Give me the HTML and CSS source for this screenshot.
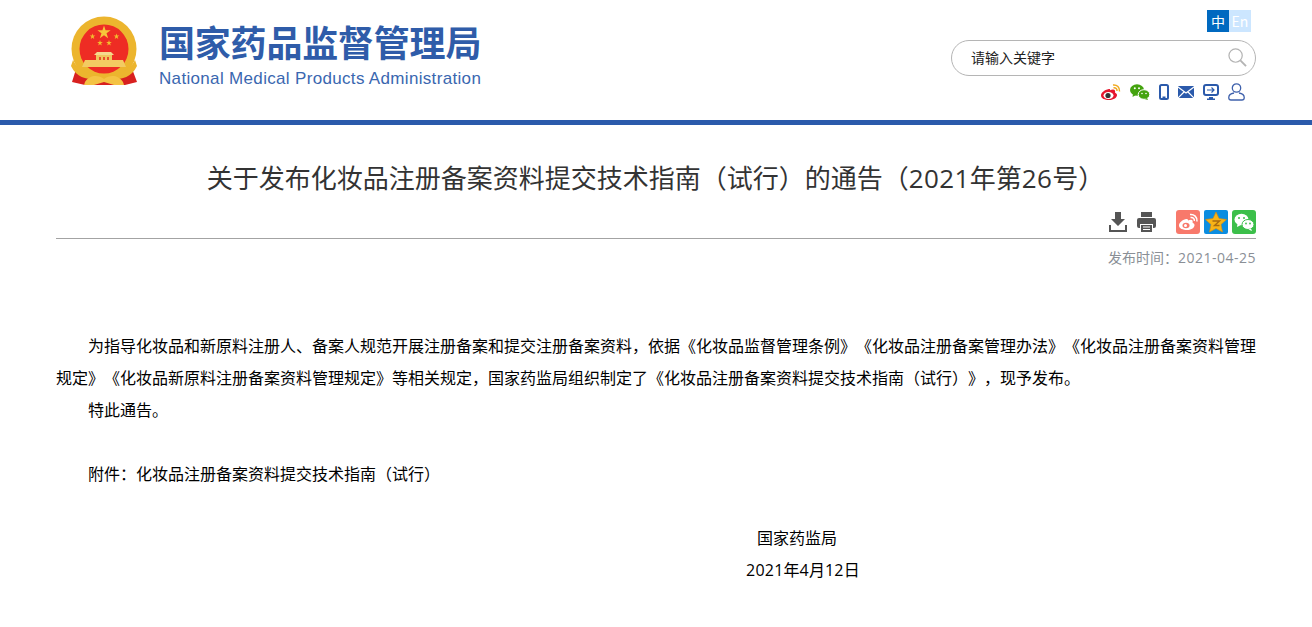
FILE: index.html
```html
<!DOCTYPE html>
<html>

<head>
    <meta content="text/html; charset=utf-8" http-equiv="Content-Type">
    <title>关于发布化妆品注册备案资料提交技术指南（试行）的通告（2021年第26号）</title>
    <link rel="stylesheet" href="styles.css">
</head>

<body>
    <div class="header">
        <div class="container headerInner">
            <div class="logo">
                <svg class="emblem" width="68" height="70" viewBox="0 0 68 70">
                    <defs>
                        <polygon id="star" points="0,-1 .225,-.31 .95,-.31 .36,.12 .59,.81 0,.38 -.59,.81 -.36,.12 -.95,-.31 -.225,-.31"/>
                    </defs>
                    <path d="M6 50 L1 66 L14 69 L54 69 L66 66 L60 50 Z" fill="#d8201f"/>
                    <circle cx="33" cy="33" r="32.500" fill="#ecb52e"/>
                    <circle cx="33" cy="33" r="24.500" fill="#ee2c24"/>
                    <use href="#star" transform="translate(33 16.500) scale(7)" fill="#f6c83a"/>
                    <use href="#star" transform="translate(21.500 20.500) scale(3)" fill="#f2bd2e"/>
                    <use href="#star" transform="translate(45.500 20.500) scale(3)" fill="#f2bd2e"/>
                    <use href="#star" transform="translate(29 27) scale(3)" fill="#f2bd2e"/>
                    <use href="#star" transform="translate(38 27) scale(3)" fill="#f2bd2e"/>
                    <path d="M26 36 H40 L43 39 H23 Z" fill="#f5d98e"/>
                    <path d="M25 39 H41 V44 H25 Z" fill="#f0c65e"/>
                    <path d="M28 41 h2 v3 h-2 z M32 41 h2 v3 h-2 z M36 41 h2 v3 h-2 z" fill="#e8502a"/>
                    <path d="M14 44 H52 L55 51 H11 Z" fill="#f3cb62"/>
                    <path d="M2 44 C9 58 22 58 33 58 C44 58 57 58 64 44 L66 50 C58 66 44 63 33 63 C22 63 8 66 0 50 Z" fill="#ecb52e"/>
                    <path d="M14 66 C19 58 28 59 33 63 C38 59 47 58 52 66 L53 69 H43 L33 66 L23 69 H13 Z" fill="#f4c344"/>
                </svg>
                <div class="logoText">
                    <div class="logoCn">国家药品监督管理局</div>
                    <div class="logoEn">National Medical Products Administration</div>
                </div>
            </div>
            <div class="tools">
                <div class="lang"><span class="langCn">中</span><span class="langEn">En</span></div>
                <div class="searchBox">
                    <span class="searchText">请输入关键字</span>
                    <svg width="19" height="19" viewBox="0 0 20 20" fill="none" stroke="#b4b4b4">
                        <circle cx="8" cy="8" r="7" stroke-width="1.300"/>
                        <path d="M13 13 L19 19" stroke-width="2"/>
                    </svg>
                </div>
                <div class="topIcons">
                    <svg width="20" height="18" viewBox="0 0 20 18">
                        <path d="M8 6 C3 7 0 10 0 12.500 C0 15.500 4 17 8 17 C13 17 16 14.500 16 12 C16 10.500 14.500 10 14 9.500 C14.500 8 14 6.500 12 6.500 C11 6.500 10 7 9 7.300 C9.300 6.500 9 5.800 8 6 Z" fill="#e6162d"/>
                        <ellipse cx="7.500" cy="12.500" rx="5" ry="3.500" fill="#fff"/>
                        <circle cx="7" cy="12.500" r="2.600" fill="#333"/>
                        <path d="M12 2 C16 1.500 19 4.500 18.500 8.500 M12.500 4.800 C14.800 4.500 16.200 6 16 8" fill="none" stroke="#f0a91f" stroke-width="1.500"/>
                    </svg>
                    <svg width="20" height="16" viewBox="0 0 20 16">
                        <ellipse cx="7" cy="6" rx="7" ry="5.800" fill="#44a30f"/>
                        <path d="M3 10 L2.500 13 L6 11 Z" fill="#44a30f"/>
                        <ellipse cx="14" cy="10.500" rx="5.800" ry="4.800" fill="#44a30f" stroke="#fff" stroke-width="1"/>
                        <path d="M17 14 L18 16 L14.500 15 Z" fill="#44a30f"/>
                        <circle cx="4.800" cy="4.300" r="1" fill="#fff"/><circle cx="9" cy="4.300" r="1" fill="#fff"/>
                        <circle cx="12" cy="9.500" r=".8" fill="#fff"/><circle cx="16" cy="9.500" r=".8" fill="#fff"/>
                    </svg>
                    <svg width="10" height="16" viewBox="0 0 10 16">
                        <rect x="1" y="1" width="8" height="14" rx="1.500" fill="#fff" stroke="#2b5aab" stroke-width="2"/>
                        <rect x="3.500" y="12.500" width="3" height="1.500" fill="#2b5aab"/>
                    </svg>
                    <svg width="16" height="12" viewBox="0 0 16 12">
                        <rect width="16" height="12" rx="1" fill="#2b5aab"/>
                        <path d="M0 1 L8 7 L16 1 M0 12 L6 6 M16 12 L10 6" fill="none" stroke="#fff" stroke-width="1.200"/>
                    </svg>
                    <svg width="16" height="16" viewBox="0 0 16 16">
                        <rect x="1" y="1" width="14" height="10" rx="2" fill="#fff" stroke="#2b5aab" stroke-width="2"/>
                        <path d="M6 13 h4 v1.500 h2 V16 H4 v-1.500 h2 z" fill="#2b5aab"/>
                        <path d="M4 6 h7 M8.500 3.500 L11 6 L8.500 8.500" fill="none" stroke="#2b5aab" stroke-width="1.200"/>
                    </svg>
                    <svg width="17" height="18" viewBox="0 0 17 18" fill="none" stroke="#3f61ac" stroke-width="1.300">
                        <circle cx="8.500" cy="5" r="4.200"/>
                        <path d="M6 10 C3 10.500 .5 12 .8 15 C.9 16.500 2 17 3 17 H14 C15 17 16.100 16.500 16.200 15 C16.500 12 14 10.500 11 10"/>
                    </svg>
                </div>
            </div>
        </div>
    </div>

    <div class="container">
        <h1 class="title">关于发布化妆品注册备案资料提交技术指南（试行）的通告（<span class="num">2021</span>年第<span class="num">26</span>号）</h1>
        <div class="shareBar">
            <svg class="shareDown" width="18" height="20" viewBox="0 0 18 20" fill="#555">
                <path d="M6 0 h6 v7 h4 L9 14 L2 7 h4 z"/>
                <path d="M0 13 h2 v5 h14 v-5 h2 v7 H0 z"/>
            </svg>
            <svg class="sharePrint" width="19" height="20" viewBox="0 0 19 20" fill="#555">
                <rect x="4" y="0" width="11" height="5"/>
                <path d="M2 6 h15 a2 2 0 0 1 2 2 v6 a2 2 0 0 1 -2 2 h-1 v-4 H3 v4 H2 a2 2 0 0 1 -2 -2 V8 a2 2 0 0 1 2 -2 z"/>
                <rect x="4" y="13" width="11" height="7"/>
                <path d="M6 15 h7 M6 17.500 h7" stroke="#fff" stroke-width="1"/>
            </svg>
            <svg class="shareBtn" width="24" height="24" viewBox="0 0 24 24">
                <rect width="24" height="24" rx="3" fill="#f8796b"/>
                <path d="M10 9 C6 10 3 13 3 15.500 C3 18.500 7 20 11 20 C16 20 18.500 17.500 18.500 15 C18.500 13.500 17 13 16.500 12.500 C17 11 16.500 9.800 15 9.800 C14 9.800 13 10.200 12 10.500 C12.300 9.500 11.300 8.700 10 9 Z" fill="#fff"/>
                <ellipse cx="10" cy="15.500" rx="3.500" ry="2.800" fill="#f8796b"/>
                <circle cx="9.500" cy="15.500" r="1.500" fill="#fff"/>
                <path d="M14 4.500 C18 4 21.500 7 21 11.500 M14.500 7.500 C17 7 18.700 9 18.300 11" fill="none" stroke="#fff" stroke-width="1.500"/>
            </svg>
            <svg class="shareBtn" width="24" height="24" viewBox="0 0 24 24">
                <rect width="24" height="24" rx="2" fill="#0b8de0"/>
                <path d="M12 2 L15 8.500 L22.500 9.500 L17 14.500 L18.500 22 L12 18.500 L5.500 22 L7 14.500 L1.500 9.500 L9 8.500 Z" fill="#f8b417" stroke="#d98a0c" stroke-width=".6"/>
                <path d="M8.500 11 h7 l-5 4.500 h5" fill="none" stroke="#a86a10" stroke-width="1.400"/>
            </svg>
            <svg class="shareBtn" width="24" height="24" viewBox="0 0 24 24">
                <rect width="24" height="24" rx="3" fill="#3cbf4a"/>
                <ellipse cx="9.500" cy="9.500" rx="7" ry="5.800" fill="#fff"/>
                <path d="M5.500 13.500 L5 17 L9 15 Z" fill="#fff"/>
                <ellipse cx="16" cy="14.500" rx="6" ry="5" fill="#fff" stroke="#3cbf4a"/>
                <path d="M19 18.500 L20 21 L16.500 19.500 Z" fill="#fff"/>
                <circle cx="7" cy="8" r="1" fill="#3cbf4a"/><circle cx="12" cy="8" r="1" fill="#3cbf4a"/>
                <circle cx="14" cy="13.500" r=".9" fill="#3cbf4a"/><circle cx="18" cy="13.500" r=".9" fill="#3cbf4a"/>
            </svg>
        </div>
        <div class="pubDate">发布时间：<span class="num">2021-04-25</span></div>
        <div class="article">
            <p class="indent">为指导化妆品和新原料注册人、备案人规范开展注册备案和提交注册备案资料，依据《化妆品监督管理条例》《化妆品注册备案管理办法》《化妆品注册备案资料管理规定》《化妆品新原料注册备案资料管理规定》等相关规定，国家药监局组织制定了《化妆品注册备案资料提交技术指南（试行）》，现予发布。</p>
            <p class="indent">特此通告。</p>
            <p>&nbsp;</p>
            <p class="indent">附件：化妆品注册备案资料提交技术指南（试行）</p>
            <p>&nbsp;</p>
            <p class="signOrg">国家药监局</p>
            <p class="signDate"><span class="num">2021</span>年<span class="num">4</span>月<span class="num">12</span>日</p>
        </div>
    </div>
</body>

</html>
```

FILE: styles.css
```css
body {
    margin: 0;
    background: #fff;
    color: #000;
    font-family: "Noto Sans CJK SC", sans-serif;
    text-spacing-trim: space-all;
    overflow: hidden;
}

.container {
    width: 1200px;
    margin-left: 56px;
}

.num {
    font-family: "Open Sans", sans-serif;
    letter-spacing: 0.015em;
    line-height: 1;
}

.header {
    height: 120px;
    border-bottom: 5px solid #2b5aab;
}

.headerInner {
    display: flex;
    justify-content: space-between;
}

.logo {
    display: flex;
    align-items: flex-start;
    padding: 16px 0 0 15px;
}

.logoText {
    margin-left: 20px;
    color: #2f5ca9;
}

.logoCn {
    margin-top: 1px;
    font-size: 36px;
    font-weight: 700;
    line-height: 48px;
    letter-spacing: -0.200px;
    white-space: nowrap;
}

.logoEn {
    margin-top: 4px;
    font-family: "Liberation Sans", sans-serif;
    font-size: 17px;
    line-height: 20px;
    letter-spacing: 0.330px;
    color: #3a67b0;
    white-space: nowrap;
}

.tools {
    display: flex;
    flex-direction: column;
    align-items: flex-end;
    width: 305px;
    padding-top: 10px;
}

.lang {
    display: flex;
    margin-right: 5px;
    font-size: 14px;
    line-height: 22px;
    text-align: center;
}

.langCn {
    width: 22px;
    background: #0069c0;
    color: #fff;
}

.langEn {
    width: 22px;
    background: #cce6ff;
    color: #fff;
}

.searchBox {
    display: flex;
    align-items: center;
    justify-content: space-between;
    box-sizing: border-box;
    width: 305px;
    height: 36px;
    margin-top: 8px;
    padding: 0 8px 2px 19px;
    border: 1px solid #b5b5b5;
    border-radius: 18px;
}

.searchText {
    font-size: 14px;
    color: #222;
}

.topIcons {
    display: flex;
    align-items: center;
    gap: 9px;
    margin-top: 7px;
    margin-right: 11px;
    height: 18px;
}

.title {
    margin: 0;
    padding-top: 34px;
    padding-right: 1px;
    font-size: 26px;
    font-weight: 400;
    line-height: 36px;
    text-align: center;
    color: #333;
}

.shareBar {
    display: flex;
    align-items: center;
    justify-content: flex-end;
    height: 24px;
    margin-top: 15px;
    border-bottom: 1px solid #a3a3a3;
    padding-bottom: 4px;
}

.shareBtn {
    margin-left: 4px;
}

.sharePrint {
    margin: 0 16px 0 10px;
}

.pubDate {
    margin-top: 8px;
    font-size: 14px;
    line-height: 20px;
    text-align: right;
    color: #8a8f96;
}

.pubDate .num {
    letter-spacing: 0.500px;
}

.article {
    padding-top: 62px;
    font-size: 16px;
    line-height: 32px;
}

.article p {
    margin: 0;
    text-align: justify;
}

.article .indent {
    text-indent: 32px;
}

.article .signOrg {
    padding-left: 701px;
}

.article .signDate {
    padding-left: 690px;
}
```
